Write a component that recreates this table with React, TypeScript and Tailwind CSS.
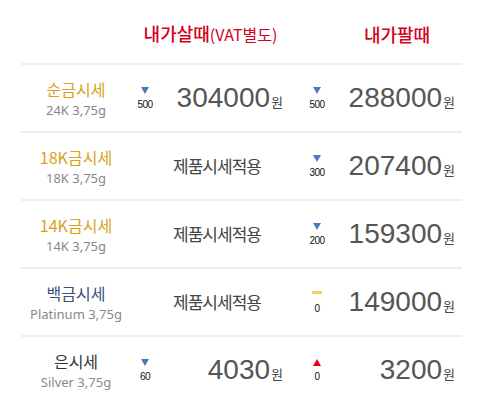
import React from "react";

type Change = { dir: "down" | "up" | "flat"; value: string };

const KR = { fontFamily: '"Noto Sans CJK KR", "Noto Sans", sans-serif' };
const NS = { fontFamily: '"Noto Sans", "Noto Sans CJK KR", sans-serif' };
const AR = { fontFamily: '"Liberation Sans", Arial, sans-serif' };

function Indicator({ c }: { c: Change }) {
  return (
    <div className="flex flex-col items-center">
      <div className="h-[7px] flex items-center justify-center">
        {c.dir === "down" && (
          <svg width="8" height="7" viewBox="0 0 8 7">
            <polygon points="0,0 8,0 4,7" fill="#4a7cbc" />
          </svg>
        )}
        {c.dir === "up" && (
          <svg width="8" height="7" viewBox="0 0 8 7">
            <polygon points="0,7 8,7 4,0" fill="#e8000b" />
          </svg>
        )}
        {c.dir === "flat" && <div className="w-[10px] h-[3px] bg-[#fdc862] mt-[-3px]" />}
      </div>
      <div className="text-[10px] leading-[10px] mt-[6px] text-[#111] tracking-[-0.5px]" style={AR}>
        {c.value}
      </div>
    </div>
  );
}

function Price({ v }: { v: string }) {
  return (
    <div className="flex items-baseline justify-end pr-[7px] text-[#555]">
      <span className="text-[28px] leading-[32px]" style={AR}>
        {v}
      </span>
      <span className="text-[13px] ml-[1px] text-[#444]" style={KR}>
        원
      </span>
    </div>
  );
}

type Row = {
  name: string;
  sub: string;
  color: string;
  buy?: { c: Change; v: string };
  sell: { c: Change; v: string };
};

const rows: Row[] = [
  {
    name: "순금시세",
    sub: "24K 3,75g",
    color: "#d8a21c",
    buy: { c: { dir: "down", value: "500" }, v: "304000" },
    sell: { c: { dir: "down", value: "500" }, v: "288000" },
  },
  {
    name: "18K금시세",
    sub: "18K 3,75g",
    color: "#d8a21c",
    sell: { c: { dir: "down", value: "300" }, v: "207400" },
  },
  {
    name: "14K금시세",
    sub: "14K 3,75g",
    color: "#d8a21c",
    sell: { c: { dir: "down", value: "200" }, v: "159300" },
  },
  {
    name: "백금시세",
    sub: "Platinum 3,75g",
    color: "#36517c",
    sell: { c: { dir: "flat", value: "0" }, v: "149000" },
  },
  {
    name: "은시세",
    sub: "Silver 3,75g",
    color: "#333333",
    buy: { c: { dir: "down", value: "60" }, v: "4030" },
    sell: { c: { dir: "up", value: "0" }, v: "3200" },
  },
];

export default function App() {
  return (
    <div className="w-[483px] h-[418px] bg-white overflow-hidden">
      <div className="ml-[21px] w-[441px]">
        <div className="grid grid-cols-[110px_28px_131px_54px_118px] h-[63px] items-center">
          <div />
          <div className="col-span-2 flex items-baseline justify-center pt-[4px] text-[#d4001e]" style={KR}>
            <span className="text-[18px] leading-[24px] font-medium">내가살때</span>
            <span className="text-[16px] leading-[24px]">(VAT별도)</span>
          </div>
          <div className="col-span-2 flex justify-center pl-[42px] pt-[4px] text-[#d4001e]" style={KR}>
            <span className="text-[18px] leading-[24px] font-medium">내가팔때</span>
          </div>
        </div>
        {rows.map((r) => (
          <div
            key={r.name}
            className="grid grid-cols-[110px_28px_131px_54px_118px] h-[68px] items-center border-t-2 border-[#eeeeee]"
          >
            <div className="flex flex-col items-center pt-[1px]">
              <div className="text-[16px] leading-[23px]" style={{ ...KR, color: r.color }}>
                {r.name}
              </div>
              <div className="text-[13px] leading-[18px] text-[#888]" style={NS}>
                {r.sub}
              </div>
            </div>
            {r.buy ? (
              <>
                <Indicator c={r.buy.c} />
                <Price v={r.buy.v} />
              </>
            ) : (
              <div
                className="col-span-2 flex justify-center pl-[13px] text-[17px] tracking-[-1px] text-[#444]"
                style={KR}
              >
                제품시세적용
              </div>
            )}
            <Indicator c={r.sell.c} />
            <Price v={r.sell.v} />
          </div>
        ))}
      </div>
    </div>
  );
}
